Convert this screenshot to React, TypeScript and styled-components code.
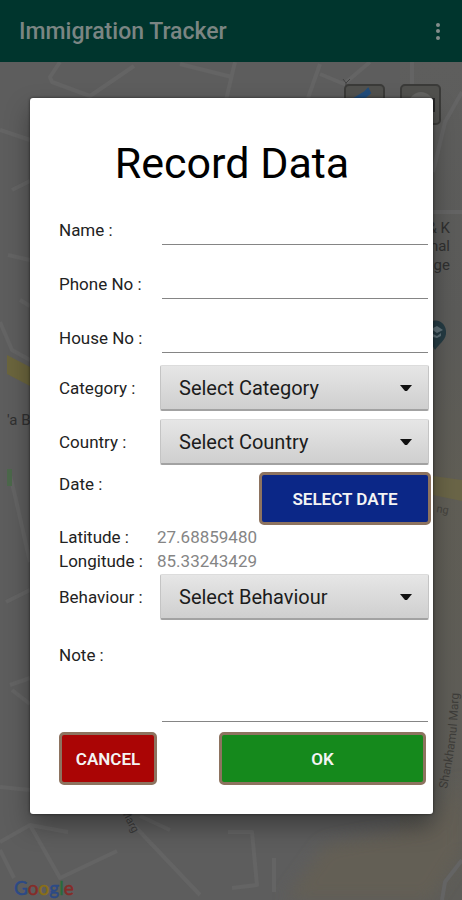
import React from "react";
import styled, { createGlobalStyle } from "styled-components";

const GlobalStyle = createGlobalStyle`
  *, *::before, *::after { box-sizing: border-box; }
  body { margin: 0; background: #5d5d5d; font-family: Roboto, "Liberation Sans", sans-serif; }
  button, input, select, textarea { font: inherit; color: inherit; }
`;

const Screen = styled.div`
  display: flex;
  flex-direction: column;
  min-height: 100vh;
`;

const AppBar = styled.header`
  display: flex;
  align-items: center;
  justify-content: space-between;
  height: 62px;
  padding: 2px 12px 0 19px;
  background: #00352d;
  color: #7b8583;
`;

const AppTitle = styled.h1`
  margin: 0;
  font-size: 23px;
  line-height: 28px;
  font-weight: 500;
`;

const MenuButton = styled.button`
  display: flex;
  padding: 0;
  border: 0;
  background: none;
`;

const MapArea = styled.main`
  position: relative;
  flex: 1;
  padding: 36px 29px 86px 30px;
  overflow: hidden;
`;

const MapCanvas = styled.svg`
  position: absolute;
  inset: 0;
  width: 100%;
  height: 100%;
  font-family: Roboto, sans-serif;
`;

const Dialog = styled.form`
  position: relative;
  display: flex;
  flex-direction: column;
  padding: 39px 4px 29px 29px;
  border-radius: 3px;
  background: #fff;
  color: #222;
  box-shadow: 0 0 3px rgba(0, 0, 0, 0.6), 0 12px 24px rgba(0, 0, 0, 0.35);
`;

const DialogTitle = styled.h2`
  margin: 0 0 5px;
  padding-right: 24px;
  font-size: 43px;
  line-height: 52px;
  font-weight: 400;
  text-align: center;
  color: #000;
`;

const Row = styled.div<{ $height: number; $top?: number; $alignTop?: boolean }>`
  display: grid;
  grid-template-columns: 101px minmax(0, 1fr);
  align-items: ${(p) => (p.$alignTop ? "start" : "center")};
  min-height: ${(p) => p.$height}px;
  margin-top: ${(p) => p.$top ?? 0}px;
`;

const Label = styled.label<{ $drop?: number }>`
  padding-top: ${(p) => p.$drop ?? 0}px;
  font-size: 17px;
  line-height: 24px;
  white-space: nowrap;
`;

const LineInput = styled.input`
  align-self: stretch;
  min-width: 0;
  margin: 0 1px 3px 2px;
  padding: 12px 4px 0;
  border: 0;
  border-bottom: 1px solid #858585;
  border-radius: 0;
  background: none;
  font-size: 17px;
  outline: none;
`;

const NoteInput = styled.textarea`
  height: 86px;
  min-width: 0;
  margin: 0 1px 0 2px;
  padding: 12px 4px;
  border: 0;
  border-bottom: 1px solid #858585;
  border-radius: 0;
  background: none;
  font-size: 17px;
  resize: none;
  outline: none;
`;

const SelectBox = styled.div`
  display: grid;
  align-items: center;
  > * { grid-area: 1 / 1; }
`;

const Select = styled.select`
  width: 100%;
  height: 46px;
  padding: 0 40px 0 18px;
  border: 1px solid #c4c4c4;
  border-top-color: #dcdcdc;
  border-bottom: 2px solid #a2a2a2;
  border-radius: 2px;
  background: linear-gradient(#e6e6e6, #cfcfcf);
  font-size: 20px;
  color: #1c1c1c;
  appearance: none;
`;

const Caret = styled.svg`
  justify-self: end;
  margin-right: 16px;
  pointer-events: none;
`;

const Coordinate = styled.output`
  margin-left: -3px;
  font-size: 17px;
  line-height: 23px;
  color: #858585;
`;

const Action = styled.button<{ $color: string; $width: string }>`
  width: ${(p) => p.$width};
  height: 53px;
  padding: 0;
  border: 3px solid #8d735f;
  border-radius: 5px;
  background: ${(p) => p.$color};
  color: #f4f4f4;
  font-size: 17px;
  font-weight: 600;
  line-height: 24px;
`;

const DateAction = styled(Action)`
  justify-self: end;
  margin-right: -2px;
`;

const Actions = styled.div`
  display: flex;
  justify-content: space-between;
  gap: 16px;
  margin-top: 10px;
  padding-right: 3px;
`;

function MapBackground() {
  return (
    <MapCanvas viewBox="0 62 462 838" preserveAspectRatio="xMidYMid slice" aria-hidden="true">
      <defs>
        <linearGradient id="land" x1="0" y1="0" x2="0" y2="1">
          <stop offset="0" stopColor="#5e5e5d" />
          <stop offset="0.3" stopColor="#5b5b59" />
          <stop offset="0.5" stopColor="#605e56" />
          <stop offset="1" stopColor="#5d5c58" />
        </linearGradient>
        <filter id="soft"><feGaussianBlur stdDeviation="8" /></filter>
        <path id="marg" d="M447 789 C451 765 458 745 459 680" />
      </defs>
      <rect y="62" width="462" height="838" fill="#5d5d5d" />
      <rect x="400" y="62" width="62" height="838" fill="url(#land)" />
      <path d="M462 780 L430 825 L325 845 L285 900 H430 L462 850Z" fill="#635e54" filter="url(#soft)" />
      <g fill="none" stroke="#646464" strokeWidth="4" strokeLinejoin="round">
        <path d="M60 62 L50 77 L52 82 L90 96 L134 66" />
        <path d="M180 64 L232 77 M235 62 L226 100" />
        <path d="M320 64 L308 98 M320 74 L344 84 L370 62 M412 62 V86 M462 92 L445 122 L433 172" />
        <path d="M433 212 H462" />
        <path d="M0 130 L30 140 M12 190 L30 181 M8 255 L30 260 M20 300 L30 306 M0 322 L12 350 L30 360" />
        <path d="M10 475 L16 500 L30 562 M6 602 L30 590 M10 685 L30 678 M12 690 L30 704 M0 787 L30 790" />
        <path d="M0 842 L30 825 L60 878 L117 851 M30 825 L68 832 M0 850 L14 878" />
        <path d="M125 816 L200 895 M140 816 L170 830 M228 832 H252 L257 885 L232 888 M274 858 V892" />
        <path d="M462 860 L445 882 L442 900" />
      </g>
      <path d="M7 355 L30 367 V386 L7 374Z" fill="#6b653d" />
      <path d="M433 476 L462 480 V501 L433 495Z" fill="#6a6547" />
      <path d="M7 469 H12 V486 H7Z" fill="#4c684b" />
      <path d="M343 79 L346 83 L350 79 M346 83 V87" fill="none" stroke="#414141" />
      <rect x="345" y="85" width="39" height="39" rx="4" fill="#51514e" stroke="#3b3b39" strokeWidth="2" />
      <path d="M355 98 L365 92 L368 89 L370 93 L363 99Z" fill="#214d7c" stroke="#214d7c" strokeWidth="2" />
      <rect x="401" y="85" width="39" height="39" rx="4" fill="#51514e" stroke="#3b3b39" strokeWidth="2" />
      <circle cx="421" cy="104" r="12" fill="#646462" />
      <path d="M432 98 H435 V112 H432Z" fill="#292929" />
      <g fill="#303030" fontSize="15">
        <text x="450" y="233" textAnchor="end">&amp; K</text>
        <text x="450" y="251" textAnchor="end">nal</text>
        <text x="450" y="270" textAnchor="end">ge</text>
        <text x="7" y="425">'a Ba</text>
      </g>
      <path d="M433 321 C440 319 447 325 446 334 C445 341 438 345 435 350 L431 343Z" fill="#253b43" />
      <path d="M431 329 L437 326 L443 330 L437 333Z M433 334 L437 336 L441 333 V336 L437 338 L433 337Z" fill="#5f7178" />
      <text x="436" y="512" fontSize="11" fill="#46443f" transform="rotate(10 436 512)">ng</text>
      <text fontSize="12" fill="#3e3d3a"><textPath href="#marg">Shankhamul Marg</textPath></text>
      <text x="121" y="811" fontSize="11" fill="#3b3b3b" transform="rotate(62 121 811)">Marg</text>
      <text x="14" y="895" fontSize="19" fontFamily="Lato, sans-serif" strokeWidth="0.5">
        <tspan fill="#2c4a86" stroke="#2c4a86">G</tspan><tspan fill="#862b28" stroke="#862b28">o</tspan><tspan fill="#8a6f16" stroke="#8a6f16">o</tspan><tspan fill="#2c4a86" stroke="#2c4a86">g</tspan><tspan fill="#296b3a" stroke="#296b3a">l</tspan><tspan fill="#862b28" stroke="#862b28">e</tspan>
      </text>
    </MapCanvas>
  );
}

function TextRow({ id, label }: { id: string; label: string }) {
  return (
    <Row $height={54}>
      <Label htmlFor={id} $drop={17}>{label}</Label>
      <LineInput id={id} name={id} type="text" />
    </Row>
  );
}

function SelectRow({ id, label, prompt, top }: { id: string; label: string; prompt: string; top: number }) {
  return (
    <Row $height={46} $top={top}>
      <Label htmlFor={id}>{label}</Label>
      <SelectBox>
        <Select id={id} name={id}>
          <option>{prompt}</option>
        </Select>
        <Caret width="14" height="8" viewBox="0 0 14 8" aria-hidden="true">
          <path d="M1 1H13L8 7H6Z" fill="#111" />
        </Caret>
      </SelectBox>
    </Row>
  );
}

export default function App() {
  return (
    <Screen>
      <GlobalStyle />
      <AppBar>
        <AppTitle>Immigration Tracker</AppTitle>
        <MenuButton type="button" aria-label="More options">
          <svg width="24" height="24" viewBox="0 0 24 24" fill="#838d8b">
            <circle cx="12" cy="5" r="2" />
            <circle cx="12" cy="11" r="2" />
            <circle cx="12" cy="18" r="2" />
          </svg>
        </MenuButton>
      </AppBar>
      <MapArea>
        <MapBackground />
        <Dialog role="dialog" aria-labelledby="dialog-title" onSubmit={(e) => e.preventDefault()}>
          <DialogTitle id="dialog-title">Record Data</DialogTitle>
          <TextRow id="name" label="Name :" />
          <TextRow id="phone" label="Phone No :" />
          <TextRow id="house" label="House No :" />
          <SelectRow id="category" label="Category :" prompt="Select Category" top={9} />
          <SelectRow id="country" label="Country :" prompt="Select Country" top={8} />
          <Row $height={53} $top={7} $alignTop>
            <Label htmlFor="date">Date :</Label>
            <DateAction id="date" type="button" $color="#0b2787" $width="172px">SELECT DATE</DateAction>
          </Row>
          <Row $height={23}>
            <Label htmlFor="latitude">Latitude :</Label>
            <Coordinate id="latitude">27.68859480</Coordinate>
          </Row>
          <Row $height={23}>
            <Label htmlFor="longitude">Longitude :</Label>
            <Coordinate id="longitude">85.33243429</Coordinate>
          </Row>
          <SelectRow id="behaviour" label="Behaviour :" prompt="Select Behaviour" top={1} />
          <Row $height={86} $top={16} $alignTop>
            <Label htmlFor="note" $drop={7}>Note :</Label>
            <NoteInput id="note" name="note" />
          </Row>
          <Actions>
            <Action type="button" $color="#aa0505" $width="98px">CANCEL</Action>
            <Action type="submit" $color="#15891c" $width="207px">OK</Action>
          </Actions>
        </Dialog>
      </MapArea>
    </Screen>
  );
}
